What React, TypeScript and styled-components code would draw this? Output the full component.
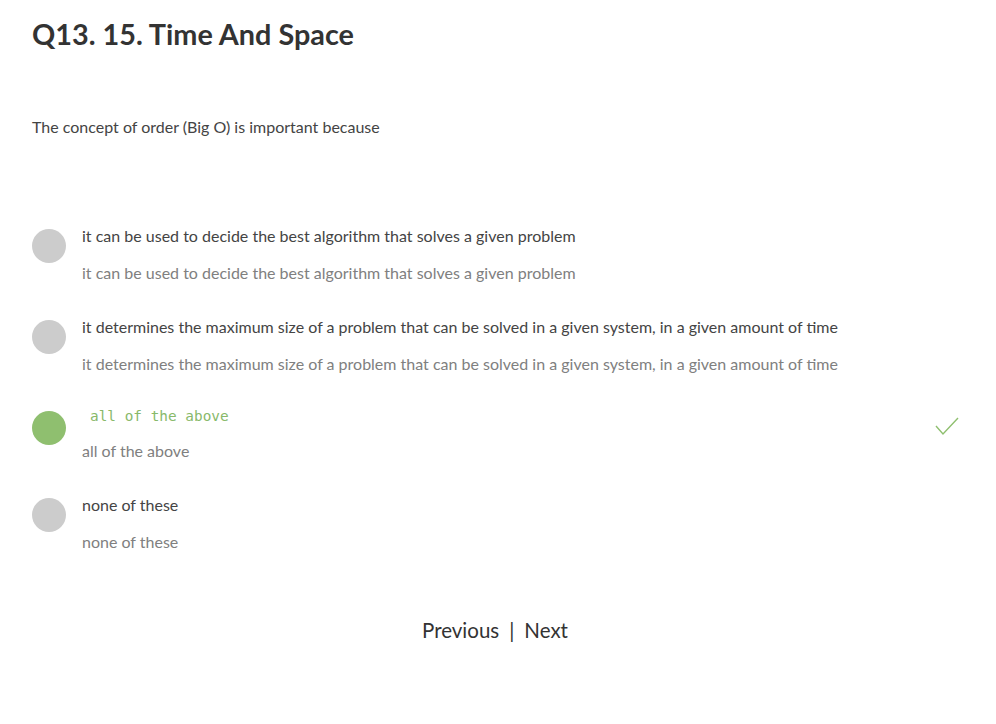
import React from "react";
import styled, { createGlobalStyle } from "styled-components";

const Global = createGlobalStyle`
  html, body { margin: 0; padding: 0; background: #fff; }
  body { font-family: "Lato", "Open Sans", sans-serif; }
`;

const Page = styled.div`
  width: 996px;
  min-height: 724px;
  box-sizing: border-box;
  padding: 16px 32px 0 32px;
  display: flex;
  flex-direction: column;
`;

const Title = styled.h1`
  margin: 0;
  font-size: 28.8px;
  line-height: 36px;
  font-weight: 700;
  color: #333;
`;

const Question = styled.p`
  margin: 65px 0 0 0;
  font-size: 16px;
  line-height: 20px;
  color: #444;
`;

const Options = styled.div`
  margin-top: 89px;
  display: flex;
  flex-direction: column;
  gap: 34px;
`;

const Row = styled.div`
  display: flex;
  align-items: flex-start;
  gap: 16px;
  position: relative;
`;

const Dot = styled.div<{ $correct?: boolean }>`
  width: 34px;
  height: 34px;
  border-radius: 50%;
  flex: none;
  margin-top: 3px;
  background: ${(p) => (p.$correct ? "#8fbf6f" : "#cccccc")};
`;

const Body = styled.div`
  display: flex;
  flex-direction: column;
  gap: 17px;
`;

const Main = styled.div`
  font-size: 16px;
  line-height: 20px;
  color: #444;
`;

const Code = styled.div`
  font-family: "DejaVu Sans Mono", "Liberation Mono", monospace;
  font-size: 14.4px;
  line-height: 16px;
  color: #88b96a;
  padding-left: 8px;
`;

const Sub = styled.div`
  font-size: 16px;
  line-height: 20px;
  color: #808080;
`;

const Check = styled.svg`
  position: absolute;
  left: 903px;
  top: 9px;
`;

const Nav = styled.div`
  margin-top: 66px;
  display: flex;
  justify-content: center;
  gap: 10px;
  font-size: 20.5px;
  line-height: 24px;
  color: #333;
  padding-right: 6px;
`;

const options = [
  {
    text: "it can be used to decide the best algorithm that solves a given problem",
  },
  {
    text: "it determines the maximum size of a problem that can be solved in a given system, in a given amount of time",
  },
  { text: "all of the above", correct: true },
  { text: "none of these" },
];

export default function App() {
  return (
    <Page>
      <Global />
      <Title>Q13. 15. Time And Space</Title>
      <Question>The concept of order (Big O) is important because</Question>
      <Options>
        {options.map((o, i) => (
          <Row key={i}>
            <Dot $correct={o.correct} />
            <Body>
              {o.correct ? <Code>{o.text}</Code> : <Main>{o.text}</Main>}
              <Sub>{o.text}</Sub>
            </Body>
            {o.correct && (
              <Check width="24" height="20" viewBox="0 0 24 20">
                <path d="M1 9 L8 17 L23 1" fill="none" stroke="#8fbf6f" strokeWidth="1.4" />
              </Check>
            )}
          </Row>
        ))}
      </Options>
      <Nav>
        <span>Previous</span>
        <span>|</span>
        <span>Next</span>
      </Nav>
    </Page>
  );
}
